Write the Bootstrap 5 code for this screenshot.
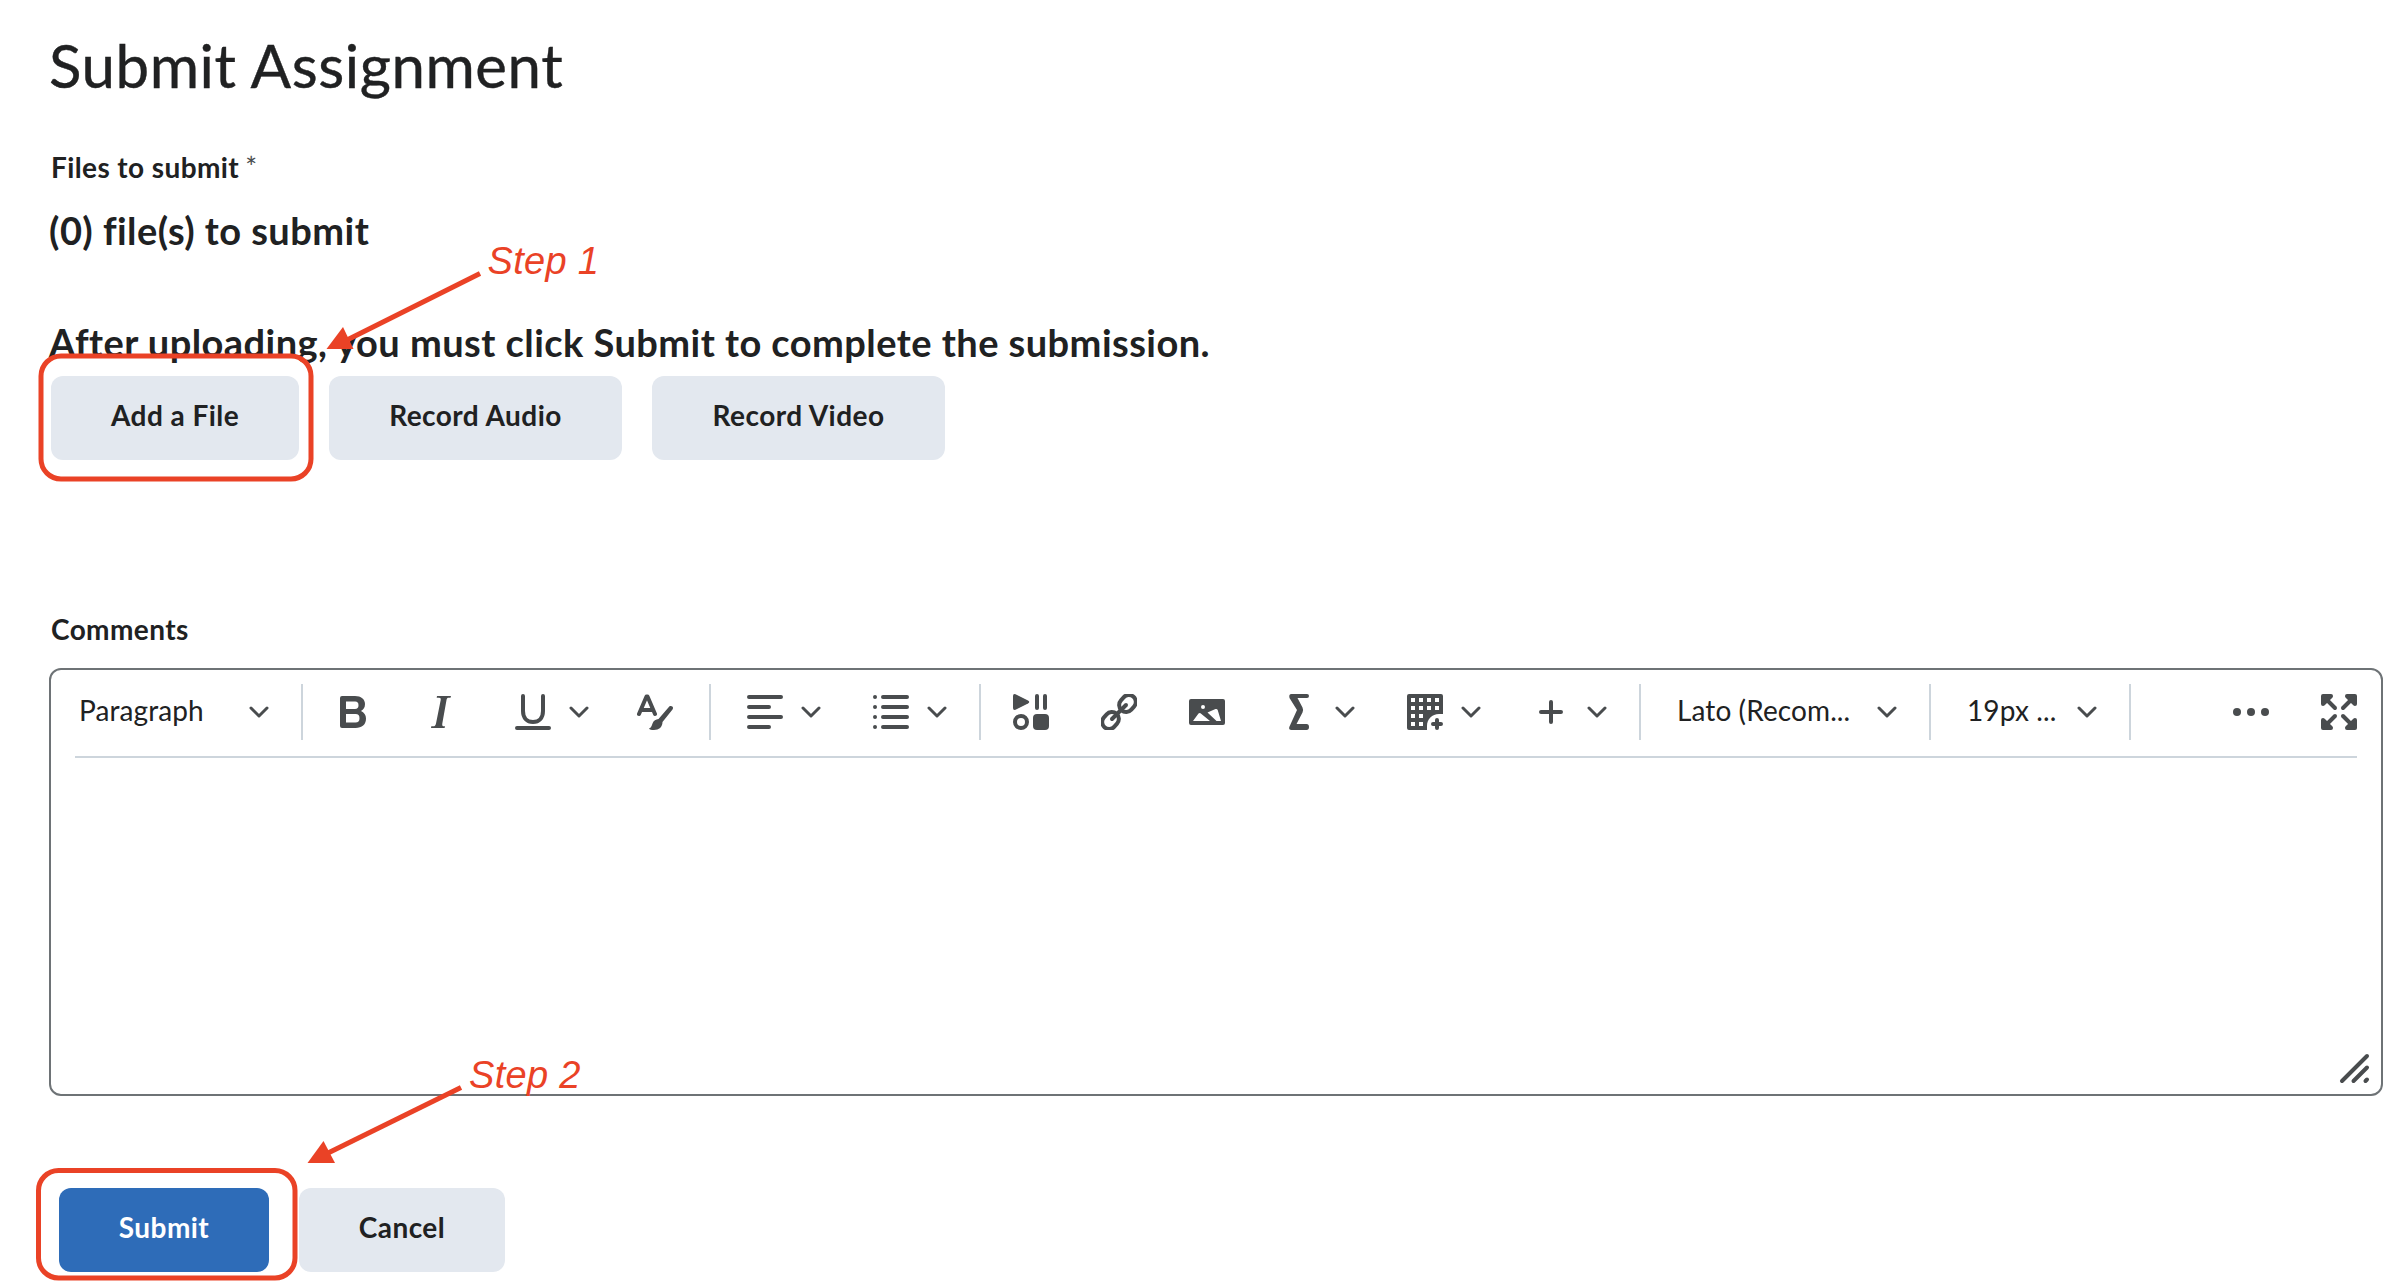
<!DOCTYPE html>
<html lang="en">
<head>
<meta charset="utf-8">
<meta name="viewport" content="width=device-width, initial-scale=1">
<title>Submit Assignment</title>
<link href="https://cdn.jsdelivr.net/npm/bootstrap@5.3.0/dist/css/bootstrap.min.css" rel="stylesheet">
<style>
  :root { --ink:#202122; --icon:#494c4e; --line:#cdd5dc; --mark-red:#ea4226; }
  body { font-family: Lato, sans-serif; color: var(--ink); background:#fff; font-size:28px; line-height:36px; overflow:hidden; }
  .page { height:1286px; padding:29px 25px 0 49px; }
  .page-title { font-size:60px; line-height:72px; font-weight:400; margin:0 0 48px; white-space:nowrap; letter-spacing:.55px; -webkit-text-stroke:.4px var(--ink); }
  .field-label { font-weight:700; font-size:28px; line-height:36px; padding-left:2px; letter-spacing:.4px; }
  .field-label .req { font-weight:400; color:var(--icon); margin-left:-1px; }
  .status { font-size:38px; line-height:48px; font-weight:700; margin:0; white-space:nowrap; letter-spacing:.45px; }
  .d-btn { --bs-btn-font-weight:700; --bs-btn-font-size:28px; --bs-btn-line-height:36px; --bs-btn-border-width:0;
    --bs-btn-padding-x:0; --bs-btn-padding-y:0; --bs-btn-border-radius:12px; --bs-btn-bg:#e3e8ef; --bs-btn-color:var(--ink);
    height:84px; padding-bottom:6px; white-space:nowrap; letter-spacing:.45px; }
  .d-btn-primary { --bs-btn-bg:#2e6cb8; --bs-btn-color:#fff; width:210px; }
  .w-file { width:248px; } .w-rec { width:293px; } .w-cancel { width:206px; }
  .gap-30 { gap:30px; }
  .editor { height:428px; border:2px solid #6e7376; border-radius:12px; padding:0 24px; margin-top:21px; }
  .toolbar { height:88px; padding:14px 0 16px; border-bottom:2px solid var(--line); }
  .rule { width:2px; align-self:stretch; background:var(--line); flex:none; }
  .tools { padding:0 10px 0 6px; }
  .tool { width:88px; flex:none; display:flex; justify-content:center; }
  .tool-menu { width:126px; flex:none; display:flex; align-items:center; gap:18px; padding-left:30px; }
  .end-tools { gap:52px; }
  .pick { flex:none; display:flex; align-items:center; justify-content:space-between; padding:0 32px 4px 36px; white-space:nowrap; letter-spacing:.1px; }
  .pick svg { position:relative; top:2px; }
  .pick-a { width:226px; padding-left:4px; } .pick-b { width:288px; } .pick-c { width:198px; }
  .st-count { margin-top:21px; }
  .st-hint { margin-top:64px; }
  .files-row { margin-top:10px; padding-left:2px; }
  .comments-label { margin-top:151px; }
  .actions { margin-top:92px; padding-left:10px; }
  svg { display:block; flex:none; color:var(--icon); fill:currentColor; }
  .chev { fill:none; stroke:currentColor; stroke-width:3; stroke-linecap:round; stroke-linejoin:round; }
  .stroke { fill:none; stroke:currentColor; stroke-linecap:round; stroke-linejoin:round; }
  .grip { right:10px; bottom:10px; }
  .notes { left:0; top:0; pointer-events:none; }
  .notes text { font:italic 400 38px "Liberation Sans", Arial, sans-serif; letter-spacing:.3px; fill:var(--mark-red); }
  .notes .ring { fill:none; stroke:var(--mark-red); stroke-width:5; }
  .notes .shaft { stroke:var(--mark-red); stroke-width:5; }
  .notes .tip { fill:var(--mark-red); }
</style>
</head>
<body>
<svg width="0" height="0" class="position-absolute"><defs>
  <symbol id="chev" viewBox="0 0 20 12"><path class="chev" d="M2 2l8 8 8-8"/></symbol>
</defs></svg>
<main class="page position-relative">
  <h1 class="page-title">Submit Assignment</h1>
  <div class="field-label">Files to submit <span class="req">*</span></div>
  <p class="status st-count">(0) file(s) to submit</p>
  <p class="status st-hint">After uploading, you must click Submit to complete the submission.</p>
  <div class="d-flex gap-30 files-row">
    <button class="btn d-btn w-file" type="button">Add a File</button>
    <button class="btn d-btn w-rec" type="button">Record Audio</button>
    <button class="btn d-btn w-rec" type="button">Record Video</button>
  </div>
  <div class="field-label comments-label">Comments</div>
  <section class="editor position-relative">
    <div class="toolbar d-flex align-items-center">
      <div class="pick pick-a"><span>Paragraph</span><svg width="20" height="12"><use href="#chev"/></svg></div>
      <div class="rule"></div>
      <div class="tools d-flex align-items-center">
        <div class="tool"><svg width="36" height="36"><path fill-rule="evenodd" d="M7 2H20C26 2 30 5 30 10C30 13.500 28.500 15.700 26 17C29 18.200 31 21 31 24.500C31 30.500 27 34 20.500 34H7Q5 34 5 32V4Q5 2 7 2ZM11 7.500V15H20Q23.500 15 23.500 11.200T20 7.500ZM11 20V28.500H20.500Q24.500 28.500 24.500 24.200T20.500 20Z"/></svg></div>
        <div class="tool"><svg width="36" height="36"><path d="M14 2H28L27.500 3.700H26C24.300 3.700 23.800 4.300 23.500 6L19.300 29.500C19 31.500 19.500 32.300 21 32.300H22L21.600 34H8L8.300 32.300H10C11.700 32.300 12.600 31.500 13 29.500L17.700 6C18 4.500 17.500 3.700 16 3.700H13.700Z"/></svg></div>
        <div class="tool-menu"><svg width="36" height="36"><path class="stroke" stroke-width="4" d="M8 2V17C8 24 12 28 18 28S28 24 28 17V2M2 34H34"/></svg><svg width="20" height="12"><use href="#chev"/></svg></div>
        <div class="tool"><svg width="36" height="36"><path class="stroke" stroke-width="4" d="M2 20L9.500 2.500H10.500L18 20M5 16H15"/><path d="M32.500 12.300C35 11 37 13.500 35.500 15.500L25.500 28C25.500 33 22 36 17 36C14.500 36 12.500 35.500 12 34.500C14.500 33.500 14.500 32 15.500 29.500C16.500 26.500 19 25.500 21.500 25Z"/></svg></div>
      </div>
      <div class="rule"></div>
      <div class="tools d-flex align-items-center">
        <div class="tool-menu"><svg width="36" height="36"><path class="stroke" stroke-width="4" d="M2 3H34M2 13H22M2 23H34M2 33H22"/></svg><svg width="20" height="12"><use href="#chev"/></svg></div>
        <div class="tool-menu"><svg width="36" height="36"><path class="stroke" stroke-width="4" d="M10 3H34M10 13H34M10 23H34M10 33H34M2 3h.01M2 13h.01M2 23h.01M2 33h.01"/></svg><svg width="20" height="12"><use href="#chev"/></svg></div>
      </div>
      <div class="rule"></div>
      <div class="tools d-flex align-items-center">
        <div class="tool"><svg width="36" height="36"><path d="M2.500 .2L15 6.500Q17.500 8 15 9.500L2.500 15.800Q0 16.500 0 14V2Q0-.5 2.500 .2Z"/><rect x="22" width="4" height="16" rx="2"/><rect x="30" width="4" height="16" rx="2"/><circle cx="8" cy="28" r="6" class="stroke" stroke-width="4"/><rect x="20" y="20" width="16" height="16" rx="4"/></svg></div>
        <div class="tool"><svg width="36" height="36"><g class="stroke" stroke-width="4"><rect x="-9" y="-7" width="18" height="14" rx="7" transform="translate(26.500 9.500) rotate(-48)"/><rect x="-9" y="-7" width="18" height="14" rx="7" transform="translate(9.500 26.500) rotate(-48)"/><path d="M11 25L25 11"/></g></svg></div>
        <div class="tool"><svg width="36" height="36"><path fill-rule="evenodd" d="M2 5H34Q36 5 36 7V29Q36 31 34 31H2Q0 31 0 29V7Q0 5 2 5ZM14 11A2 2 0 1 0 14 15A2 2 0 1 0 14 11ZM4 27L9.500 19.500Q10.500 18.500 11.500 19.300L21 27ZM18.500 18.500L26.500 15Q28 14.500 28.700 16L32 27H27.500Z"/></svg></div>
        <div class="tool-menu"><svg width="36" height="36"><path d="M10.500 0H26Q28 0 28 2T26 4H16.500L21.500 13.500Q22.700 16 21.500 18.500L15.500 30H25.500Q28 30 28 33T25.500 36H10.500Q7.500 36 8.300 33L16 16L8.500 4Q7.500 0 10.500 0Z"/></svg><svg width="20" height="12"><use href="#chev"/></svg></div>
        <div class="tool-menu"><svg width="36" height="36"><path fill-rule="evenodd" d="M2 0H34Q36 0 36 2V20H32C25 20 20 25 20 32V36H2Q0 36 0 34V2Q0 0 2 0ZM4 4V8H8V4ZM12 4V8H16V4ZM20 4V8H24V4ZM28 4V8H32V4ZM4 12V16H8V12ZM12 12V16H16V12ZM20 12V16H24V12ZM28 12V16H32V12ZM4 20V24H8V20ZM12 20V24H16V20ZM4 28V32H8V28ZM12 28V32H16V28Z"/><path class="stroke" stroke-width="4" d="M26 30H34M30 26V34"/></svg><svg width="20" height="12"><use href="#chev"/></svg></div>
        <div class="tool-menu"><svg width="36" height="36"><path class="stroke" stroke-width="4" d="M8 18H28M18 8V28"/></svg><svg width="20" height="12"><use href="#chev"/></svg></div>
      </div>
      <div class="rule"></div>
      <div class="pick pick-b"><span>Lato (Recom...</span><svg width="20" height="12"><use href="#chev"/></svg></div>
      <div class="rule"></div>
      <div class="pick pick-c"><span>19px ...</span><svg width="20" height="12"><use href="#chev"/></svg></div>
      <div class="rule"></div>
      <div class="d-flex ms-auto end-tools">
        <svg width="36" height="36"><circle cx="4" cy="18" r="4"/><circle cx="18" cy="18" r="4"/><circle cx="32" cy="18" r="4"/></svg>
        <svg width="36" height="36"><defs><g id="corner"><path d="M2 0H10Q12 0 12 2Q12 3 11.300 3.700L9.500 5.500L5.500 9.500L3.700 11.300Q3 12 2 12Q0 12 0 10V2Q0 0 2 0Z"/><path class="stroke" stroke-width="4" d="M5 5L14 14"/></g></defs><use href="#corner"/><use href="#corner" transform="matrix(-1 0 0 1 36 0)"/><use href="#corner" transform="matrix(1 0 0 -1 0 36)"/><use href="#corner" transform="matrix(-1 0 0 -1 36 36)"/></svg>
      </div>
    </div>
    <svg class="grip position-absolute" width="32" height="32"><path class="stroke" stroke-width="4" d="M3 29L28 4M14.500 29L28 15.500M26.500 29L28 27.500"/></svg>
  </section>
  <div class="d-flex gap-30 actions">
    <button class="btn d-btn d-btn-primary" type="button">Submit</button>
    <button class="btn d-btn w-cancel" type="button">Cancel</button>
  </div>
  <svg class="notes position-absolute" width="640" height="1286">
    <rect class="ring" x="41" y="356" width="270" height="123" rx="20"/>
    <path class="shaft" d="M480 273.500L345 341"/><path class="tip" d="M326.500 349L343 327L353.500 349Z"/>
    <text x="487.500" y="274">Step 1</text>
    <rect class="ring" x="38.500" y="1170.500" width="256.500" height="107.500" rx="20"/>
    <path class="shaft" d="M461 1087.500L326 1154"/><path class="tip" d="M307.500 1163L323.500 1141L335 1163Z"/>
    <text x="469" y="1088">Step 2</text>
  </svg>
</main>
<script src="https://cdn.jsdelivr.net/npm/bootstrap@5.3.0/dist/js/bootstrap.bundle.min.js"></script>
</body>
</html>
